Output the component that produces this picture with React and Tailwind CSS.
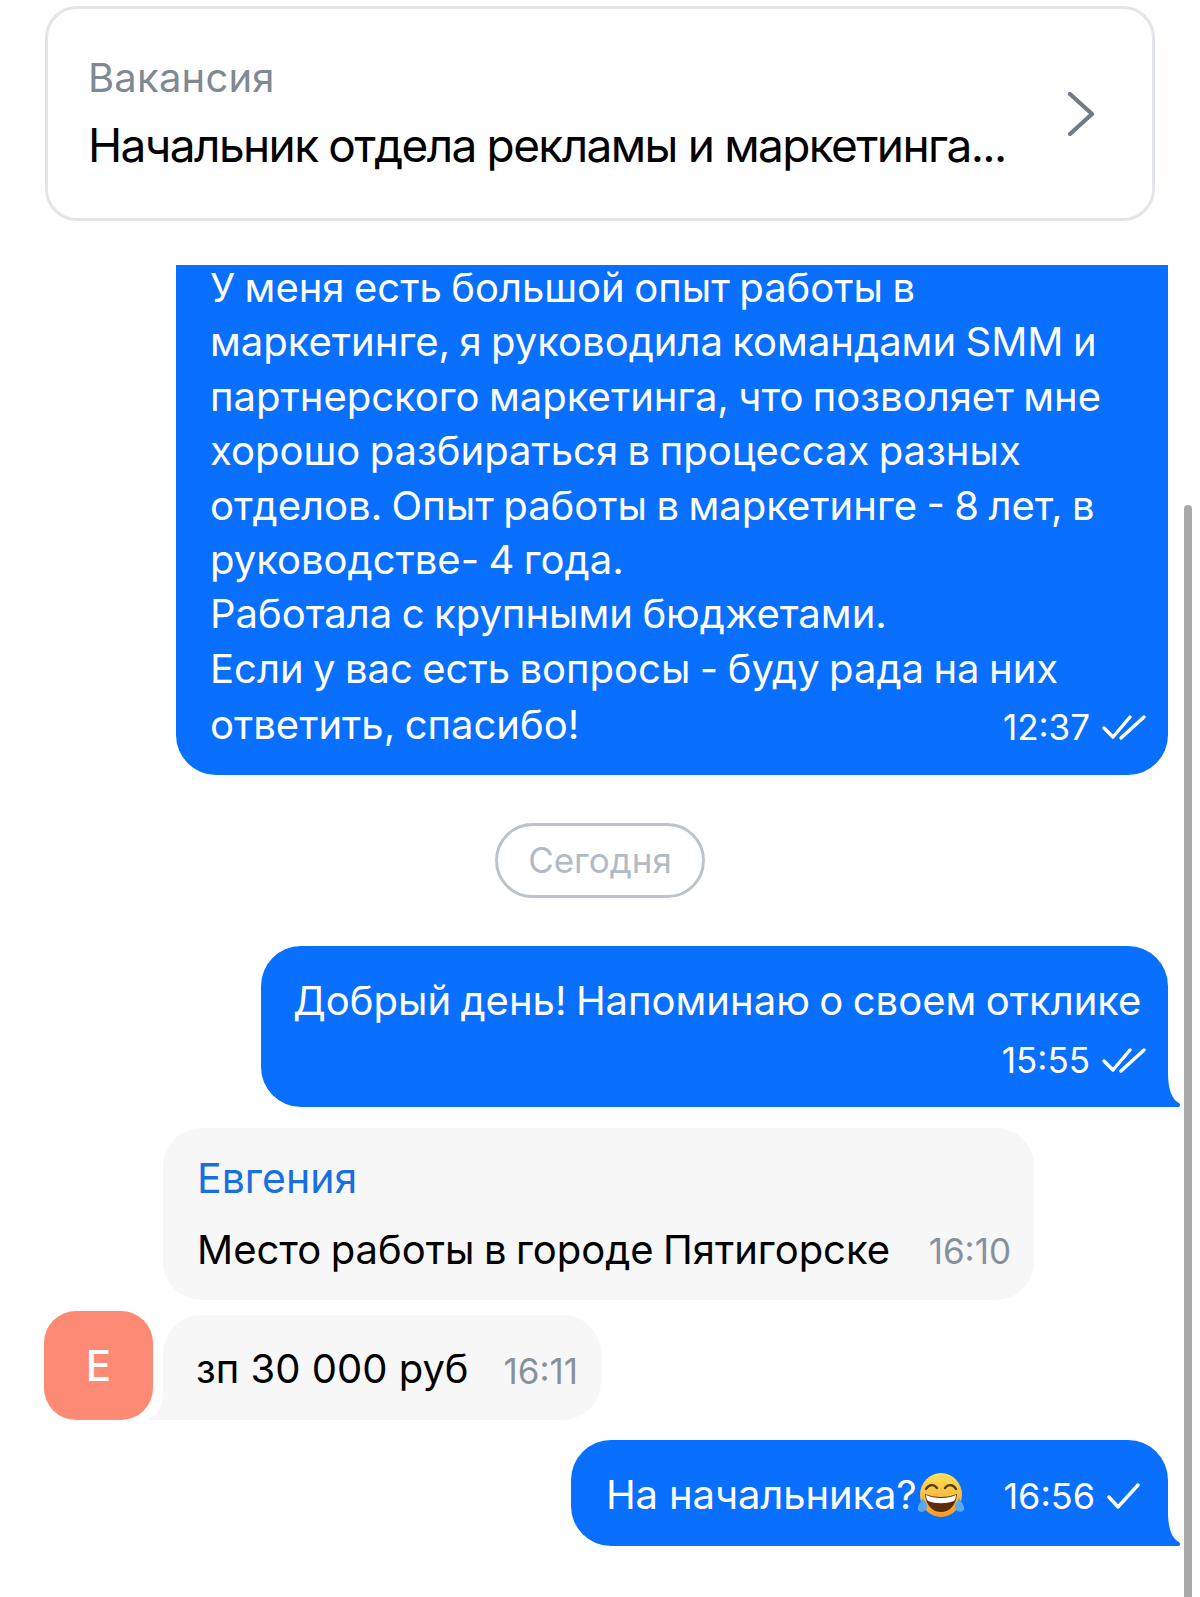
const FONT = "font-['Inter','Noto_Sans',sans-serif]";

function DoubleCheck() {
  return (
    <svg width="44" height="26" viewBox="0 0 44 26" fill="none" stroke="#fff" strokeWidth="3.4" strokeLinecap="round" strokeLinejoin="round" className="shrink-0">
      <path d="M2 14 L11 23 L28 3" />
      <path d="M19 24 L42 3" />
    </svg>
  );
}

function SingleCheck() {
  return (
    <svg width="34" height="26" viewBox="0 0 34 26" fill="none" stroke="#fff" strokeWidth="3.4" strokeLinecap="round" strokeLinejoin="round" className="shrink-0">
      <path d="M2 14 L11 24 L31 2" />
    </svg>
  );
}

// bubble corner that sticks out at the bottom of a message
function Tail({ side }) {
  if (side === "right") {
    return (
      <svg width="16" height="34" viewBox="0 0 16 34" className="absolute bottom-0 right-[-13px]">
        <path d="M0 0 H3 C3 14 6 26 14 30 C16 32 15 34 13 34 H0 Z" fill="#086fff" />
      </svg>
    );
  }
  return (
    <svg width="18" height="30" viewBox="0 0 18 30" className="absolute bottom-0 left-[-14px]">
      <path d="M18 0 H14 C14 12 10 24 1 28 C0 29 0 30 2 30 H18 Z" fill="#f7f7f8" />
    </svg>
  );
}

function LaughEmoji() {
  return (
    <svg width="48" height="46" viewBox="0 0 48 46" className="mt-[4px] shrink-0">
      <defs>
        <linearGradient id="face" x1="0" y1="0" x2="0" y2="1">
          <stop offset="0" stopColor="#fde15a" />
          <stop offset="1" stopColor="#f59a22" />
        </linearGradient>
      </defs>
      <ellipse cx="24" cy="23" rx="21" ry="22" fill="url(#face)" />
      <path d="M9 17 C12 12 17 12 20 16 M28 16 C31 12 36 12 39 17" fill="none" stroke="#5a3a12" strokeWidth="2.4" strokeLinecap="round" />
      <path d="M8 22 C17 26 31 26 40 22 C39 34 32 40 24 40 C16 40 9 34 8 22 Z" fill="#5b2d0e" />
      <path d="M9 23 C17 27 31 27 39 23 C39 26 38 28 37 29 C29 32 19 32 11 29 C10 28 9 26 9 23 Z" fill="#fff" />
      <path d="M6 26 C3 31 0 34 1 38 C4 42 11 39 10 33 Z" fill="#5aa9ef" />
      <path d="M42 26 C45 31 48 34 47 38 C44 42 37 39 38 33 Z" fill="#5aa9ef" />
    </svg>
  );
}

const OPENING = [
  "У меня есть большой опыт работы в",
  "маркетинге, я руководила командами SMM и",
  "партнерского маркетинга, что позволяет мне",
  "хорошо разбираться в процессах разных",
  "отделов. Опыт работы в маркетинге - 8 лет, в",
  "руководстве- 4 года.",
  "Работала с крупными бюджетами.",
  "Если у вас есть вопросы - буду рада на них",
];

export default function App() {
  return (
    <div className={`relative flex h-[1597px] w-[1200px] flex-col overflow-hidden bg-white ${FONT}`}>
      <div className="mx-[45px] mt-[6px] flex h-[215px] w-[1110px] items-center justify-between rounded-[32px] border-[3px] border-[#e3e6e9] pl-[40px] pr-[57px]">
        <div>
          <div className="-mt-[3px] text-[40px] leading-[50px] tracking-[0.2px] text-[#7f8992]">Вакансия</div>
          <div className="mt-[15px] whitespace-nowrap text-[46px] leading-[54px] tracking-[-1.6px] [word-spacing:-0.5px] text-black">
            Начальник отдела рекламы и маркетинга...
          </div>
        </div>
        <svg width="28" height="44" viewBox="0 0 28 44" fill="none" stroke="#6f7b87" strokeWidth="4.2" strokeLinecap="round" strokeLinejoin="round">
          <path d="M3 2 L25 22 L3 42" />
        </svg>
      </div>

      <div className="ml-[176px] mt-[44px] h-[510px] w-[992px] rounded-b-[40px] bg-[#086fff] pl-[34px] pr-[22px] text-[40px] leading-[54.4px] [word-spacing:-1.8px] text-white">
        <div className="-mt-[4px]">
          {OPENING.map((line) => (
            <div key={line} className="whitespace-nowrap">{line}</div>
          ))}
          <div className="flex items-center justify-between">
            <span className="whitespace-nowrap">ответить, спасибо!</span>
            <span className="mt-[4px] flex items-center gap-[12px] text-[35px]">
              12:37 <DoubleCheck />
            </span>
          </div>
        </div>
      </div>

      <div className="mt-[48px] flex h-[75px] w-[210px] items-center justify-center self-center rounded-full border-[3px] border-[#bcc3ca] text-[35px] text-[#b2bbc3]">
        Сегодня
      </div>

      <div className="relative ml-[261px] mt-[48px] h-[161px] w-[907px] rounded-t-[40px] rounded-bl-[40px] bg-[#086fff] pl-[32px] pr-[22px] pt-[28px] text-white">
        <div className="whitespace-nowrap text-[40px] leading-[54px] [word-spacing:-1.8px]">Добрый день! Напоминаю о своем отклике</div>
        <div className="mt-[5px] flex items-center justify-end gap-[12px] text-[35px] leading-[54px]">
          15:55 <DoubleCheck />
        </div>
        <Tail side="right" />
      </div>

      <div className="ml-[163px] mt-[21px] h-[172px] w-[871px] rounded-[38px] bg-[#f7f7f8] pl-[34px] pr-[23px] pt-[23px]">
        <div className="text-[41px] leading-[54px] text-[#1a6fe0]">Евгения</div>
        <div className="mt-[16px] flex items-center justify-between text-[40px] leading-[54px] [word-spacing:-1.8px] text-black">
          <span className="whitespace-nowrap">Место работы в городе Пятигорске</span>
          <span className="mt-[3px] text-[35px] text-[#87919b]">16:10</span>
        </div>
      </div>

      <div className="ml-[44px] mt-[11px] flex items-end">
        <div className="flex h-[109px] w-[109px] items-center justify-center rounded-[32px] bg-[#fd8a74] text-[42px] font-medium text-white">
          Е
        </div>
        <div className="relative ml-[10px] flex h-[105px] w-[438px] items-center justify-between rounded-[38px] rounded-bl-none bg-[#f7f7f8] pl-[33px] pr-[23px] text-[40px] text-black">
          <span className="mt-[3px] whitespace-nowrap">зп 30 000 руб</span>
          <span className="mt-[8px] text-[35px] text-[#87919b]">16:11</span>
          <Tail side="left" />
        </div>
      </div>

      <div className="relative ml-[571px] mt-[20px] flex h-[106px] w-[597px] items-center rounded-t-[40px] rounded-bl-[40px] bg-[#086fff] pl-[35px] pr-[27px] text-white">
        <span className="mt-[3px] whitespace-nowrap text-[40px] tracking-[-0.12px]">На начальника?</span>
        <LaughEmoji />
        <span className="ml-auto mt-[6px] flex items-center gap-[12px] text-[36px]">
          16:56 <SingleCheck />
        </span>
        <Tail side="right" />
      </div>

      <div className="absolute bottom-0 left-[1184px] top-[505px] w-[8px] rounded-t-full bg-[#a9a9a9]" />
    </div>
  );
}
